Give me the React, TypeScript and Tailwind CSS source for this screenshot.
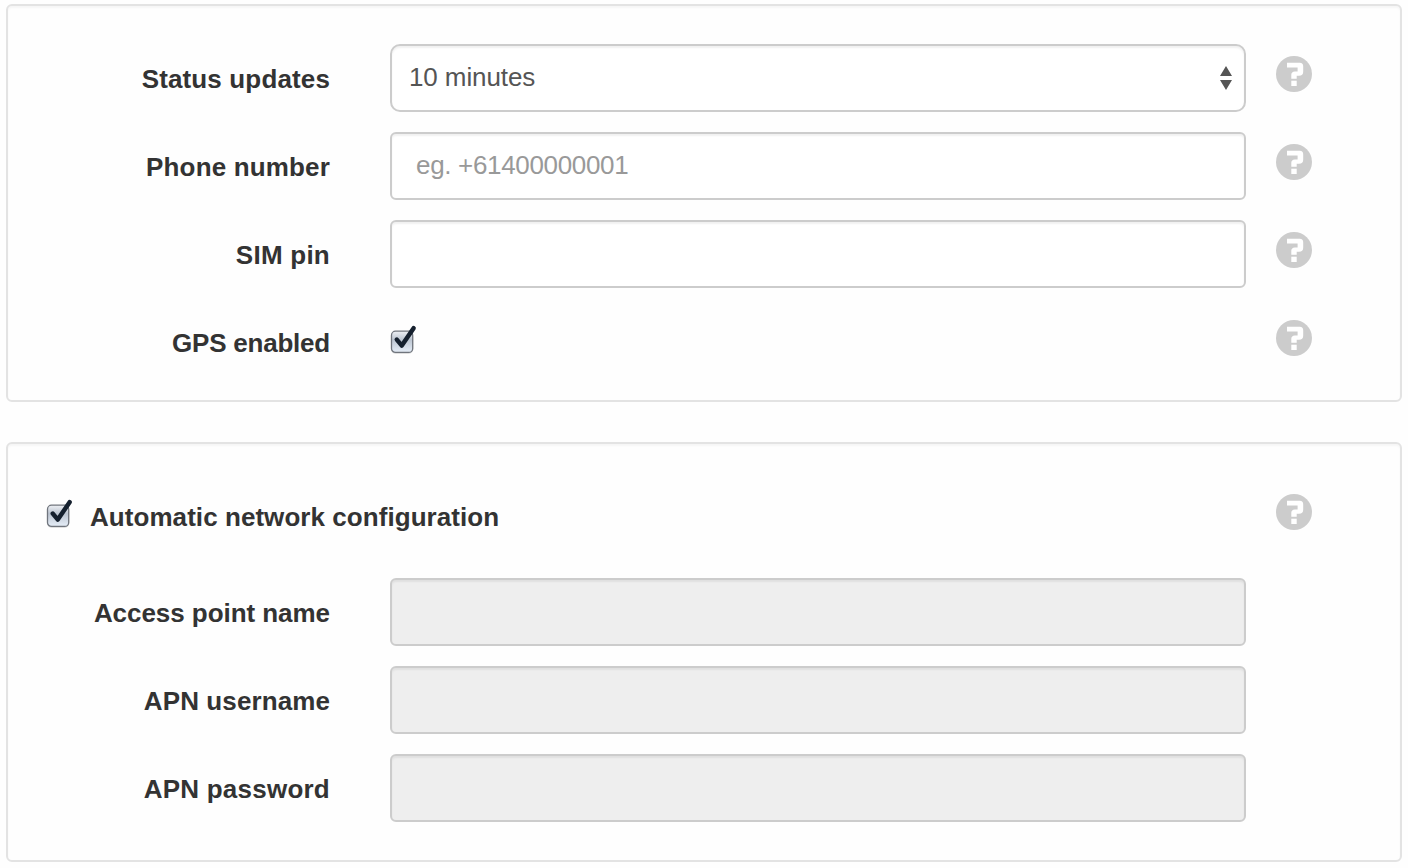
import type { ReactNode } from "react";

function HelpIcon() {
  return (
    <svg width="36" height="36" viewBox="0 0 36 36" className="block shrink-0" aria-label="Help">
      <circle cx="18" cy="18" r="18" fill="#cccccc" />
      <path
        d="M11 6.8H23.8Q27.2 7 27.2 10.2V15.8Q27.2 19.6 23 19.8H20.7V22.7H15.3V18.6Q15.5 15.6 18.8 15.4H21.6V11.6H11Z"
        fill="#fff"
      />
      <rect x="15.3" y="24.7" width="5.4" height="5.3" fill="#fff" />
    </svg>
  );
}

function CheckedBox() {
  return (
    <svg width="28" height="32" viewBox="0 0 28 32" className="block shrink-0" aria-label="Checked">
      <defs>
        <linearGradient id="boxFill" x1="0" y1="0" x2="0" y2="1">
          <stop offset="0" stopColor="#eef0f4" />
          <stop offset="0.4" stopColor="#bcc5d1" />
          <stop offset="1" stopColor="#e6eef8" />
        </linearGradient>
      </defs>
      <rect x="0.9" y="7" width="22.4" height="22" rx="4.8" fill="#000" opacity="0.12" />
      <rect x="1.5" y="6.2" width="21.2" height="21.2" rx="4" fill="url(#boxFill)" stroke="#70757d" strokeWidth="1.3" />
      <path d="M6.8 14.6L11.8 20.6L23.6 3.2" fill="none" stroke="#15202e" strokeWidth="4.5" strokeLinecap="round" strokeLinejoin="round" />
    </svg>
  );
}

function Panel({ className, children }: { className: string; children: ReactNode }) {
  return (
    <section
      className={`flex shrink-0 flex-col gap-5 rounded-[6px] border-2 border-[#e3e3e3] bg-[#fefefe] pt-[38px] shadow-[inset_0_2px_2px_rgba(0,0,0,0.035)] ${className}`}
    >
      {children}
    </section>
  );
}

function Row({
  label,
  tracking,
  help,
  children,
}: {
  label: string;
  tracking: string;
  help?: boolean;
  children: ReactNode;
}) {
  return (
    <div className="flex h-[68px] shrink-0 items-start">
      <div
        className={`w-[322px] shrink-0 pt-[15px] text-right text-[26px] leading-10 font-bold whitespace-nowrap ${tracking}`}
      >
        {label}
      </div>
      <div className="ml-[60px] w-[856px] shrink-0">{children}</div>
      {help && (
        <div className="ml-[30px] pt-3">
          <HelpIcon />
        </div>
      )}
    </div>
  );
}

const field =
  "block h-[68px] w-full rounded-[6px] border-2 border-[#cccccc] text-[26px] shadow-[inset_0_2px_2px_rgba(0,0,0,0.06)] outline-none";

export default function App() {
  return (
    <main className="flex h-[868px] w-[1408px] flex-col gap-10 overflow-hidden bg-[#fefefe] px-[6px] pt-1 font-['Liberation_Sans',Arial,sans-serif] text-[#333333]">
      <Panel className="pb-6">
        <Row label="Status updates" tracking="tracking-[0.14px]" help>
          <div className="flex h-[68px] items-center justify-between rounded-[10px] border-2 border-[#cccccc] bg-white pr-3 pb-[2px] pl-[17px] text-[26px] text-[#555555] shadow-[inset_0_2px_2px_rgba(0,0,0,0.06)]">
            <span className="tracking-[-0.1px]">10 minutes</span>
            <svg width="12" height="24" viewBox="0 0 12 24" className="relative top-px block">
              <path d="M6 0L12 10H0ZM0 14H12L6 24Z" fill="#555" />
            </svg>
          </div>
        </Row>
        <Row label="Phone number" tracking="tracking-[0.16px]" help>
          <input
            className={`${field} bg-white pb-px pl-6 tracking-[-0.33px] placeholder:text-[#999999]`}
            placeholder="eg. +61400000001"
          />
        </Row>
        <Row label="SIM pin" tracking="tracking-[0.25px]" help>
          <input className={`${field} bg-white`} />
        </Row>
        <Row label="GPS enabled" tracking="tracking-[-0.22px]" help>
          <div className="pt-[17px]">
            <CheckedBox />
          </div>
        </Row>
      </Panel>
      <Panel className="pb-[38px]">
        <div className="flex h-[76px] shrink-0 items-start pr-[88px] pl-[38px]">
          <div className="pt-[17px]">
            <CheckedBox />
          </div>
          <div className="ml-4 flex-1 pt-[15px] text-[26px] leading-10 font-bold tracking-[0.06px]">
            Automatic network configuration
          </div>
          <div className="pt-3">
            <HelpIcon />
          </div>
        </div>
        <Row label="Access point name" tracking="tracking-[-0.05px]">
          <input disabled className={`${field} bg-[#eeeeee]`} />
        </Row>
        <Row label="APN username" tracking="tracking-[0.1px]">
          <input disabled className={`${field} bg-[#eeeeee]`} />
        </Row>
        <Row label="APN password" tracking="tracking-[0.24px]">
          <input disabled className={`${field} bg-[#eeeeee]`} />
        </Row>
      </Panel>
    </main>
  );
}
